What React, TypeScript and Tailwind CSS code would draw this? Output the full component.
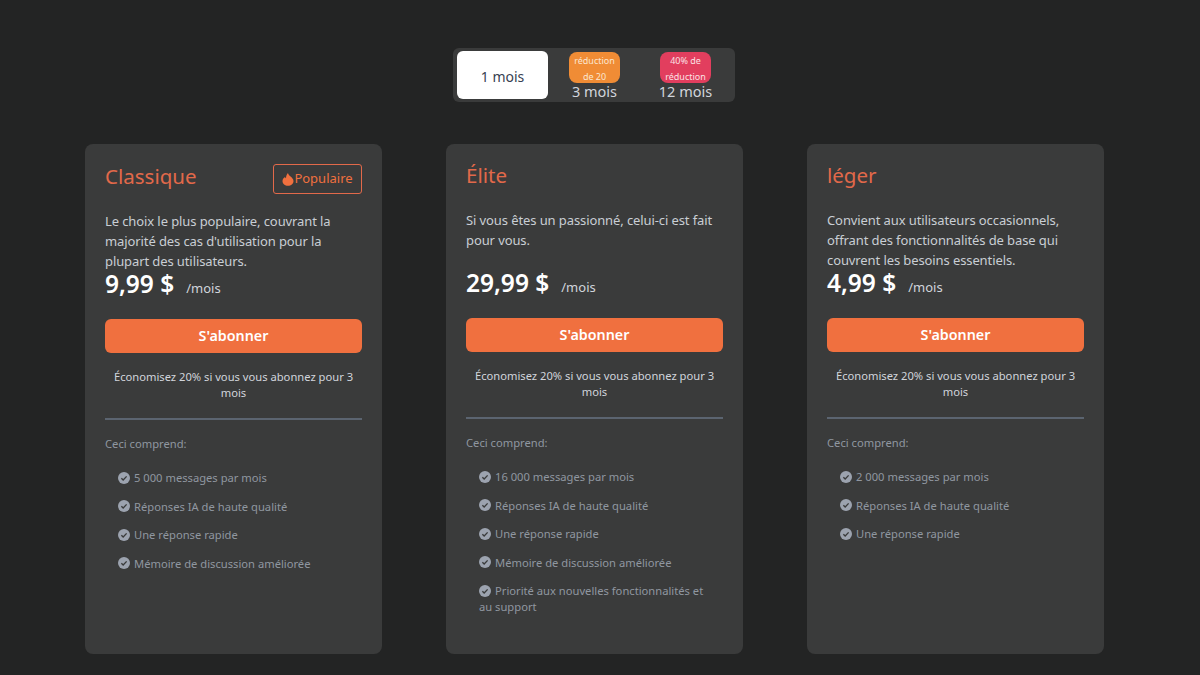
const plans = [
  {
    name: "Classique",
    popular: true,
    desc: "Le choix le plus populaire, couvrant la majorité des cas d'utilisation pour la plupart des utilisateurs.",
    price: "9,99 $",
    features: [
      "5 000 messages par mois",
      "Réponses IA de haute qualité",
      "Une réponse rapide",
      "Mémoire de discussion améliorée",
    ],
  },
  {
    name: "Élite",
    popular: false,
    desc: "Si vous êtes un passionné, celui-ci est fait pour vous.",
    price: "29,99 $",
    features: [
      "16 000 messages par mois",
      "Réponses IA de haute qualité",
      "Une réponse rapide",
      "Mémoire de discussion améliorée",
      "Priorité aux nouvelles fonctionnalités et au support",
    ],
  },
  {
    name: "léger",
    popular: false,
    desc: "Convient aux utilisateurs occasionnels, offrant des fonctionnalités de base qui couvrent les besoins essentiels.",
    price: "4,99 $",
    features: [
      "2 000 messages par mois",
      "Réponses IA de haute qualité",
      "Une réponse rapide",
    ],
  },
];

function CheckIcon() {
  return (
    <svg viewBox="0 0 16 16" className="inline-block w-[12px] h-[12px] mr-[4px] align-[-1.5px]">
      <circle cx="8" cy="8" r="8" fill="#9ca3af" />
      <path d="M4.5 8.2l2.4 2.4 4.6-4.8" fill="none" stroke="#3a3b3b" strokeWidth="1.8" />
    </svg>
  );
}

function FlameIcon() {
  return (
    <svg viewBox="0 0 12 14" className="w-[12px] h-[14px]">
      <path
        d="M6 1C6.2 2.4 7.2 3.2 8.6 4.6C10.2 6 11.5 7.4 11.5 9C11.5 11.8 9 13.8 6 13.8C3 13.8 0.5 11.8 0.5 9C0.5 7.2 1.8 5.8 3 5C3.2 5.6 3.5 6 4 6.2C4 4.2 4.8 2.2 6 1Z"
        fill="#f0703f"
      />
    </svg>
  );
}

function Card({ plan }: { plan: (typeof plans)[number] }) {
  return (
    <div className="w-[297px] h-[510px] rounded-lg bg-[#3a3b3b] px-5 pt-[14px]">
      <div className={`flex items-center justify-between ${plan.popular ? "h-[36px]" : "h-[34px]"}`}>
        <h2 className="text-[20.5px] leading-[28px] text-[#e2694a]">{plan.name}</h2>
        {plan.popular && (
          <span className="mt-[6px] flex h-[30px] w-[89px] items-center justify-center rounded-[3px] border border-[#e2694a] text-[13px] text-[#f0703f]">
            <FlameIcon />
            Populaire
          </span>
        )}
      </div>
      <p className={`${plan.popular ? "mt-[17px]" : "mt-[18px]"} h-[60px] text-[13px] leading-[20px] tracking-[-0.1px] text-[#c9ced4]`}>
        {plan.desc}
      </p>
      <div className="mt-[-2px] flex h-[30px] items-baseline">
        <span className="text-[24.5px] font-semibold leading-[30px] text-white">{plan.price}</span>
        <span className="ml-[12px] text-[13px] text-[#d1d5db]">/mois</span>
      </div>
      <button className="mt-[20px] h-[34px] w-full rounded-md bg-[#f0703f] text-[14.3px] font-semibold text-white">
        S'abonner
      </button>
      <p className="mt-[16px] text-center text-[11.2px] leading-[15.5px] text-[#d1d5db]">
        Économisez 20% si vous vous abonnez pour 3 mois
      </p>
      <div className="mt-[18px] h-[2px] bg-[#5b6470]" />
      <p className="mt-[16px] text-[11.2px] leading-[16px] text-[#9097a0]">Ceci comprend:</p>
      <ul className="mt-[18px] flex flex-col gap-[12.5px] pl-[13px] pr-[8px] text-[11.2px] leading-[16px] text-[#9097a0]">
        {plan.features.map((f) => (
          <li key={f}>
            <CheckIcon />
            {f}
          </li>
        ))}
      </ul>
    </div>
  );
}

export default function App() {
  return (
    <div
      className="flex h-[675px] w-[1200px] flex-col items-center overflow-hidden bg-[#232424] pr-[11px] pt-[48px]"
      style={{ fontFamily: '"Noto Sans", sans-serif' }}
    >
      <div className="mr-[1px] flex h-[54px] w-[282px] items-center rounded-md bg-[#3a3b3b] pl-[4px]">
        <div className="flex h-[48px] w-[91px] items-center justify-center rounded-md bg-white pt-[3px] text-[14px] text-[#374151]">
          1 mois
        </div>
        <div className="ml-[21px] mt-[1px] flex w-[51px] flex-col items-center">
          <span className="flex h-[31px] w-[51px] items-center justify-center rounded-lg bg-[#f08c35] pt-[2px] text-center text-[9px] leading-[16px] text-[#fbe6d0]">
            réduction de 20
          </span>
          <span className="text-[14.5px] leading-[16px] text-[#d1d5db]">3 mois</span>
        </div>
        <div className="ml-[40px] mt-[1px] flex w-[51px] flex-col items-center">
          <span className="flex h-[31px] w-[51px] items-center justify-center rounded-lg bg-[#e23e5e] pt-[2px] text-center text-[9px] leading-[16px] text-[#fbe0e4]">
            40% de réduction
          </span>
          <span className="whitespace-nowrap text-[14.5px] leading-[16px] text-[#d1d5db]">12 mois</span>
        </div>
      </div>
      <div className="mt-[42px] flex gap-[64px]">
        {plans.map((p) => (
          <Card key={p.name} plan={p} />
        ))}
      </div>
    </div>
  );
}
